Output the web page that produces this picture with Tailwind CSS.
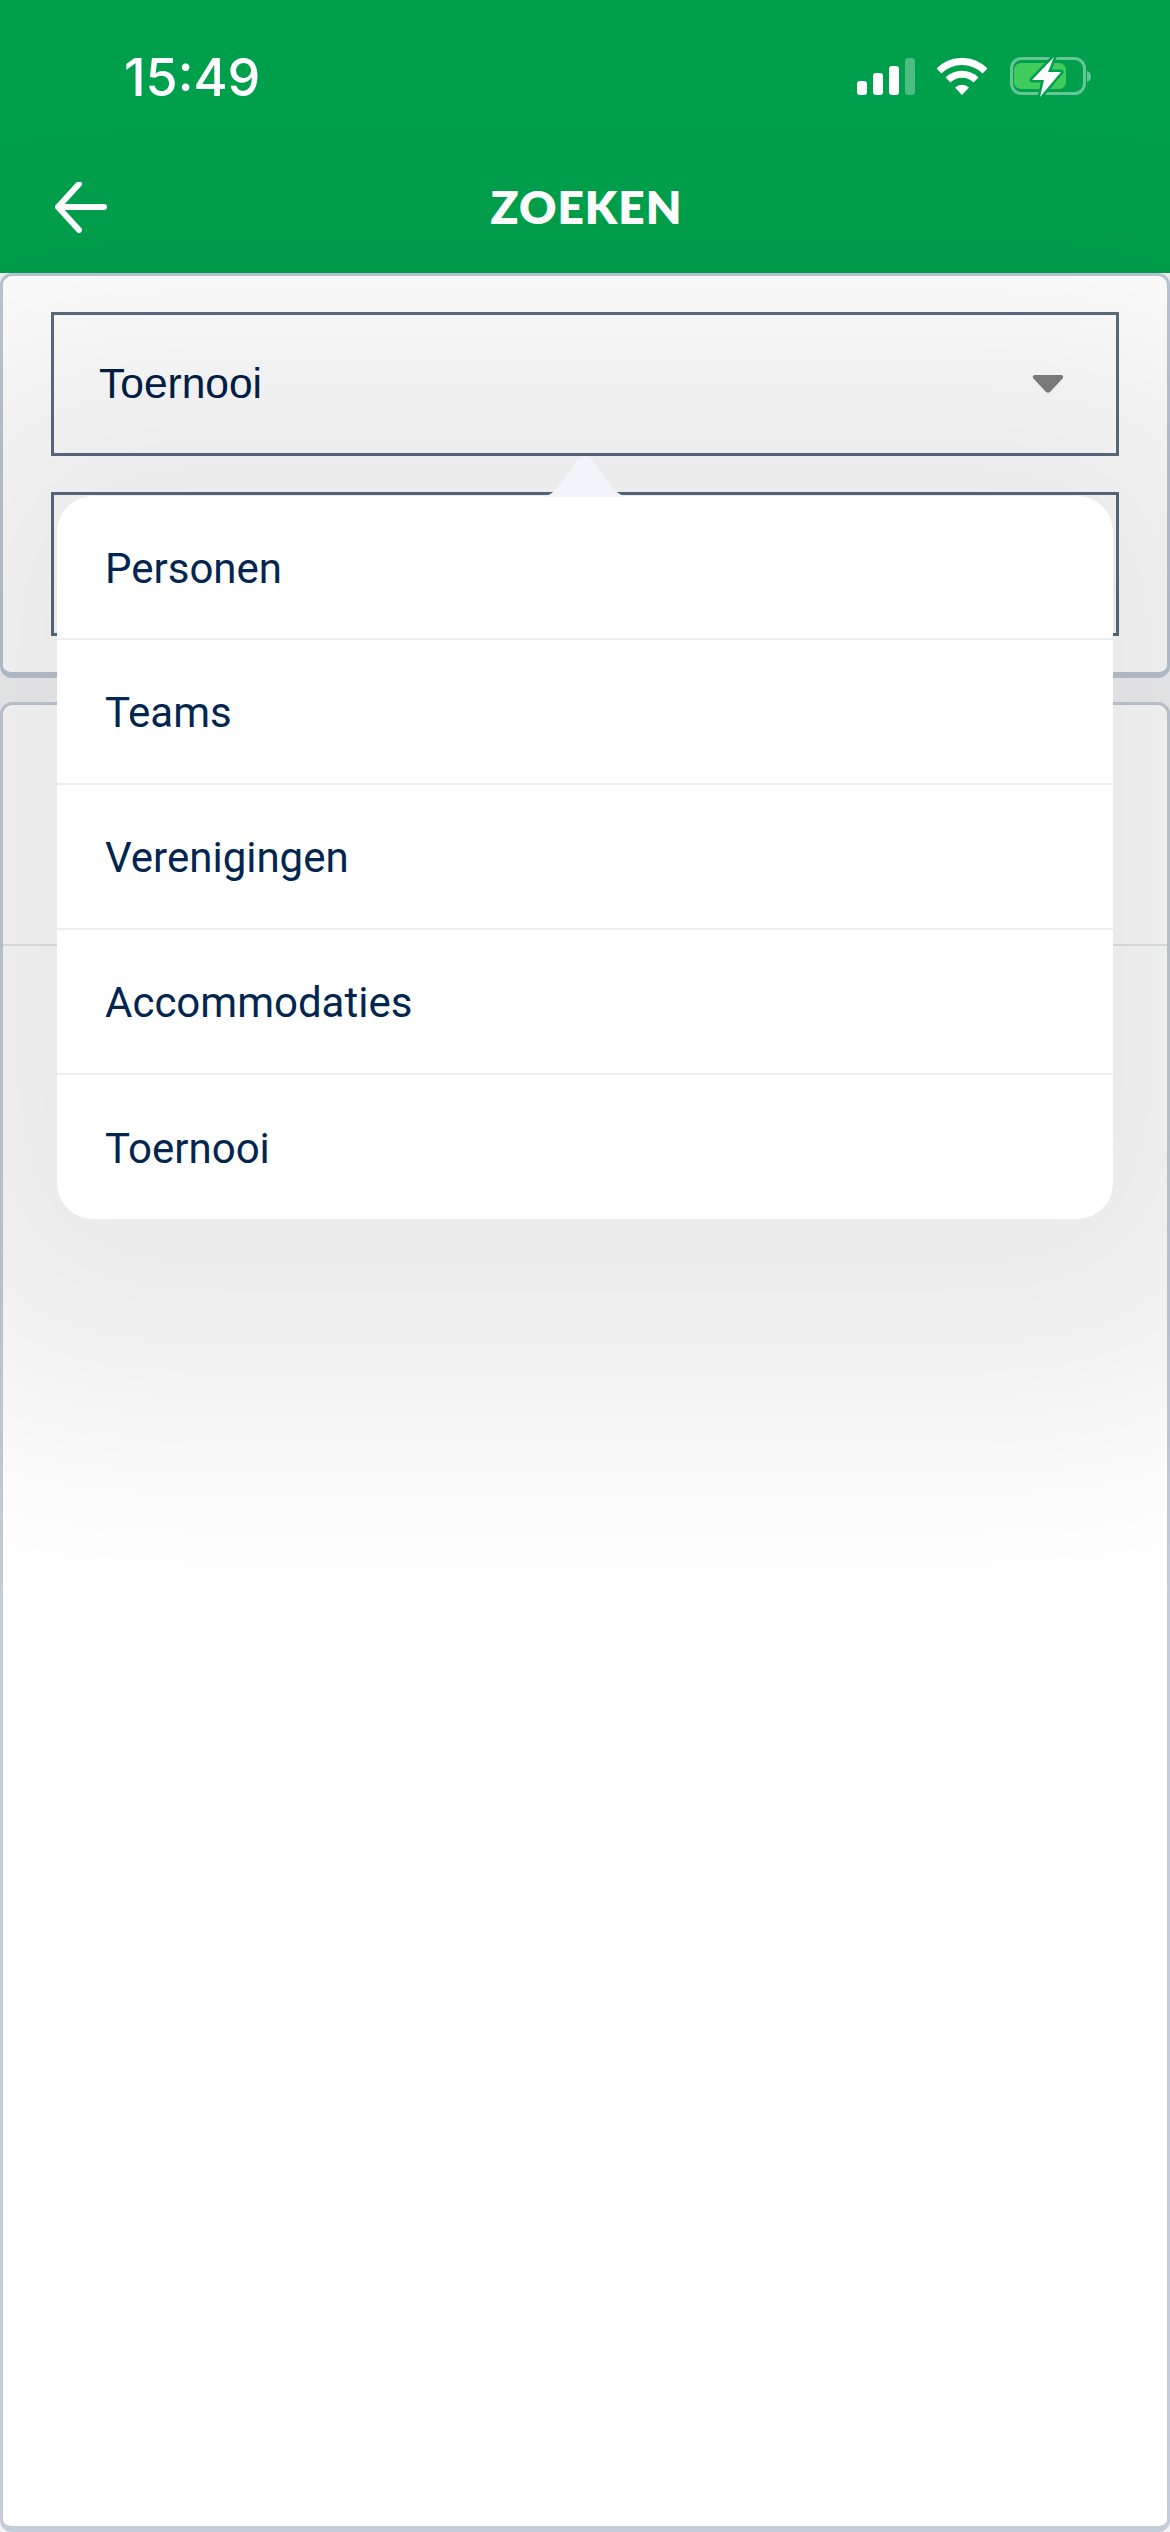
<!DOCTYPE html>
<html lang="nl">

<head>
    <meta charset="UTF-8">
    <meta name="viewport" content="width=device-width, initial-scale=1.0">
    <title>Zoeken</title>
    <script src="https://cdn.jsdelivr.net/npm/@tailwindcss/browser@4"></script>
</head>

<body class="relative h-[2532px] w-[1170px] overflow-hidden bg-[#f2f3f5] flex flex-col">

    <!-- Header -->
    <header class="h-[273px] shrink-0 bg-[#009f4c] flex flex-col text-white">
        <div class="h-[154px] flex items-start justify-between pt-[47px] pl-[124px] pr-[79px]">
            <span class="font-['Inter',sans-serif] font-medium text-[52px] leading-[62px]">15:49</span>
            <div class="flex items-start gap-[22px] pt-[11px]">
                <svg width="58" height="38" viewBox="0 0 58 38">
                    <rect x="0" y="23" width="10" height="14" rx="3" fill="#fff" />
                    <rect x="16" y="15" width="10" height="22" rx="3" fill="#fff" />
                    <rect x="32" y="8" width="10" height="29" rx="3" fill="#fff" />
                    <rect x="48" y="0" width="10" height="37" rx="3" fill="#fff" fill-opacity="0.3" />
                </svg>
                <svg width="50" height="38" viewBox="0 0 50 38">
                    <path d="M2 13 A32.5 32.5 0 0 1 48 13" fill="none" stroke="#fff" stroke-width="7" />
                    <path d="M11 22 A20 20 0 0 1 39 22" fill="none" stroke="#fff" stroke-width="7" />
                    <path d="M18 29.5 A10.5 10.5 0 0 1 32 29.5 L25 37 Z" fill="#fff" />
                </svg>
                <svg class="-mt-[1px]" width="82" height="40" viewBox="0 0 82 40">
                    <rect x="2.5" y="1.5" width="73" height="35" rx="10" fill="none" stroke="#fff" stroke-opacity="0.4" stroke-width="3" />
                    <path d="M78 14 C81 15 82 17 82 19.5 C82 22 81 24 78 25 Z" fill="#fff" fill-opacity="0.4" />
                    <rect x="5" y="6" width="52" height="26" rx="7" fill="#40cc5c" />
                    <path d="M45 0 L23 23 L35 23 L31 40 L52 15 L39 15 Z" fill="#fff" stroke="#009f4c" stroke-width="5" stroke-linejoin="round" paint-order="stroke" />
                </svg>
            </div>
        </div>
        <div class="relative flex-1 flex items-start justify-center">
            <svg class="absolute left-[55px] top-[28px]" width="52" height="52" viewBox="0 0 52 52">
                <path d="M3 25 H49 M24 2 L3 25 L24 48" fill="none" stroke="#fff" stroke-width="6" stroke-linecap="round" stroke-linejoin="round" />
            </svg>
            <h1 class="font-['Lato',sans-serif] font-extrabold text-[46px] leading-[56px] tracking-[1px] pt-[25px] pl-[3px] box-content">ZOEKEN</h1>
        </div>
    </header>

    <!-- Search filters -->
    <section class="h-[405px] shrink-0 rounded-[12px] border-t-[3px] border-x-[3px] border-b-[6px] border-[#bcc6d2] bg-white pt-[36px] px-[48px] flex flex-col gap-[36px]">
        <div class="h-[144px] border-[3px] border-[#5a6c82] pl-[45px] pr-[52px] flex items-center justify-between">
            <span class="font-['Liberation_Sans',sans-serif] text-[42.5px] text-[#02204a]">Toernooi</span>
            <svg width="32" height="20" viewBox="0 0 32 20">
                <path d="M3 1 H29 C31 1 32 3 30.5 4.5 L18 18 C17 19 15 19 14 18 L1.5 4.5 C0 3 1 1 3 1 Z" fill="#808080" />
            </svg>
        </div>
        <div class="h-[144px] border-[3px] border-[#5a6c82]"></div>
    </section>

    <!-- Results -->
    <section class="mt-[24px] flex-1 rounded-[12px] border-t-[3px] border-x-[3px] border-b-[6px] border-[#c3ccd7] bg-white">
        <div class="h-[241px] border-b-2 border-[#e3e6ea]"></div>
    </section>

    <!-- Type menu -->
    <div class="absolute left-[57px] top-[496px] w-[1056px] rounded-[36px] bg-white shadow-[0_8px_250px_173px_rgba(0,0,0,0.085)]">
        <svg class="absolute left-[481px] top-[-40px]" width="94" height="41" viewBox="0 0 94 41">
            <path d="M0 41 C9 41 14 38 19 32 L40 4 C44 -1 50 -1 54 4 L75 32 C80 38 85 41 94 41 Z" fill="#f3f4f9" />
        </svg>
        <ul class="font-['Roboto',sans-serif] text-[42px] text-[#02264f] divide-y-2 divide-[#eceef1]">
            <li class="h-[144px] pl-[48px] pt-[2px] flex items-center">Personen</li>
            <li class="h-[145px] pl-[48px] pt-[2px] flex items-center">Teams</li>
            <li class="h-[145px] pl-[48px] pt-[2px] flex items-center">Verenigingen</li>
            <li class="h-[145px] pl-[48px] pt-[2px] flex items-center">Accommodaties</li>
            <li class="h-[144px] pl-[48px] pt-[2px] flex items-center">Toernooi</li>
        </ul>
    </div>

</body>

</html>
